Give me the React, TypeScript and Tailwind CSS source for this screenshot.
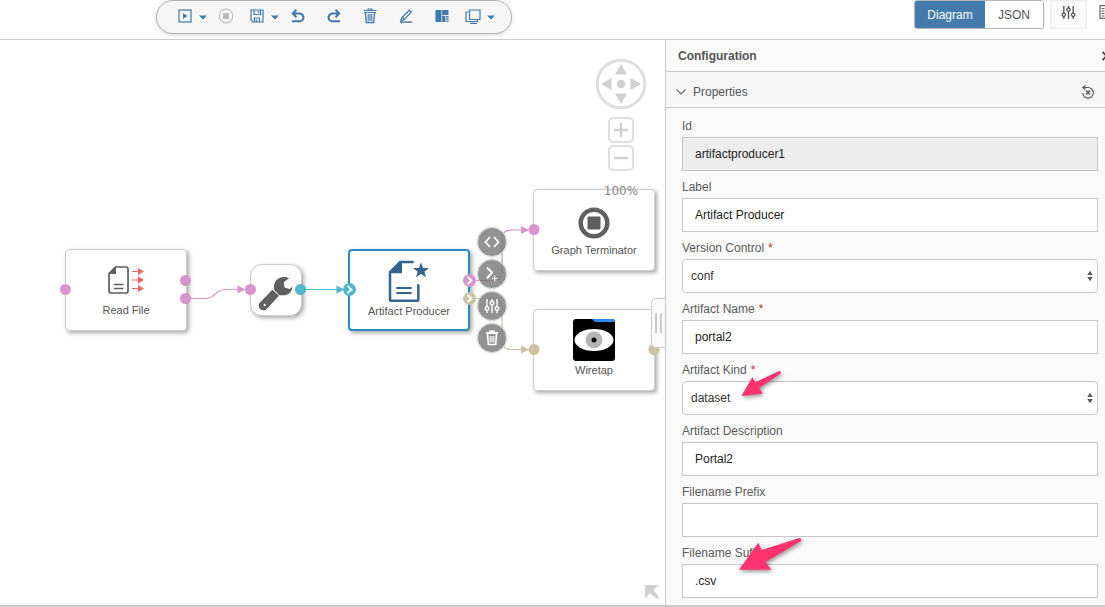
import type { ReactNode } from "react";

const PINK = "#d795cc";
const TEAL = "#52b7cc";
const SAND = "#cbc3a4";

function Caret() {
  return (
    <svg width="8" height="5" viewBox="0 0 8 5" className="mt-[2px] shrink-0">
      <path d="M0 0.500h8L4 4.500z" fill="#3f79ad" />
    </svg>
  );
}

function Tool({ label, menu, children }: { label: string; menu?: boolean; children: ReactNode }) {
  if (menu) {
    return (
      <div className="flex w-9 items-center">
        <button type="button" aria-label={label} className="flex w-[26px] justify-center">
          {children}
        </button>
        <button type="button" aria-label={`${label} options`} className="flex w-[10px] justify-center">
          <Caret />
        </button>
      </div>
    );
  }
  return (
    <button type="button" aria-label={label} className="flex w-9 items-center justify-center">
      {children}
    </button>
  );
}

function Toolbar() {
  return (
    <div className="flex h-[34px] items-stretch rounded-full border border-[#b3b3b3] bg-[#f6f6f6] px-[15px] pb-[2px] shadow-[0_1px_4px_rgba(0,0,0,0.18)]">
      <Tool label="Run" menu>
        <svg width="14" height="14" viewBox="0 0 14 14">
          <rect x="1" y="1" width="12" height="12" fill="none" stroke="#3f79ad" strokeWidth="1.200" />
          <path d="M5 4v6l4.500-3z" fill="#3f79ad" />
        </svg>
      </Tool>
      <Tool label="Stop">
        <svg width="16" height="16" viewBox="0 0 16 16">
          <circle cx="8" cy="8" r="6.800" fill="none" stroke="#bdbdbd" strokeWidth="1.200" />
          <rect x="5" y="5" width="6" height="6" rx="1" fill="#b8b8b8" />
        </svg>
      </Tool>
      <Tool label="Save" menu>
        <svg width="14" height="14" viewBox="0 0 14 14" fill="none" stroke="#3f79ad" strokeWidth="1.200">
          <path d="M1 1h12v12H3L1 11z" />
          <path d="M4 1v4.500h6.500V1M8.500 2v2M4.500 13V9h5v4M6.500 10.500V13" />
        </svg>
      </Tool>
      <Tool label="Undo">
        <svg width="14" height="14" viewBox="0 0 14 14" fill="none" stroke="#3f79ad" strokeWidth="2.100">
          <path d="M5.500 0.800L1.800 4.500 5.500 8.200M2 4.500h6.500a3.900 3.900 0 0 1 0 7.800H1" />
        </svg>
      </Tool>
      <Tool label="Redo">
        <svg width="14" height="14" viewBox="0 0 14 14" fill="none" stroke="#3f79ad" strokeWidth="2.100">
          <path d="M8.500 0.800l3.700 3.700L8.500 8.200M12 4.500H5.500a3.900 3.900 0 0 0 0 7.800H13" />
        </svg>
      </Tool>
      <Tool label="Delete">
        <svg width="14" height="16" viewBox="0 0 14 16" fill="none" stroke="#3f79ad">
          <path d="M0.500 2.500h13M5 2V1h4v1M1 4.500h12" strokeWidth="1.200" />
          <path d="M2.300 4.500l1 10h7.400l1-10" strokeWidth="1.300" />
          <path d="M5.200 6v7M7 6v7M8.800 6v7" strokeWidth="1.100" />
        </svg>
      </Tool>
      <Tool label="Edit">
        <svg width="14" height="14" viewBox="0 0 14 14" fill="none" stroke="#3f79ad" strokeWidth="1.300">
          <path d="M10.300 1.200l2 1.700-7 7.600-3.500 1.600 1-3.300z" />
          <path d="M3.500 8.500l2 1.700" />
          <path d="M1 13.100h12" strokeWidth="1.400" />
        </svg>
      </Tool>
      <Tool label="Layout">
        <svg width="14" height="14" viewBox="0 0 14 14" fill="#3f79ad">
          <path d="M0.500 1h6v12h-6zM7.200 1h6.300v5H7.200zM7.200 6.800h3.300V13H7.200zM11.300 7h2.200v1.700h-2.200zM11.300 9.500h2.200v1.500h-2.200zM11.300 11.700h2.200V13h-2.200z" />
        </svg>
      </Tool>
      <Tool label="Windows" menu>
        <svg width="16" height="15" viewBox="0 0 16 15" fill="none" stroke="#3f79ad" strokeWidth="1.200">
          <path d="M4.500 1h10.500v9.500H4.500zM3.500 3H1v9.500h11.500V11M5 14.300h7" />
        </svg>
      </Tool>
    </div>
  );
}

function Sliders({ color, size }: { color: string; size: number }) {
  return (
    <svg width={size} height={size} viewBox="0 0 16 16" fill="none" stroke={color} strokeWidth="1.400">
      <path d="M3 1v7.500M3 12.500V15M8 1v2M8 7v8M13 1v7.500M13 12.500V15" />
      <circle cx="3" cy="10.500" r="1.800" />
      <circle cx="8" cy="5" r="1.800" />
      <circle cx="13" cy="10.500" r="1.800" />
    </svg>
  );
}

function Header() {
  return (
    <header className="flex h-10 shrink-0 items-start border-b border-[#cbcbcb] bg-white">
      <div className="flex min-w-0 flex-1 justify-center pl-[3px]">
        <Toolbar />
      </div>
      <div className="flex w-[440px] shrink-0 items-start overflow-hidden pl-[249px]">
        <div className="flex h-[29px] w-[130px] shrink-0 overflow-hidden rounded-[3px] border border-[#b5b5b5] shadow-sm">
          <button type="button" className="w-[70px] bg-[#437bad] text-white">
            Diagram
          </button>
          <button type="button" className="flex-1 bg-white text-[#555]">
            JSON
          </button>
        </div>
        <button
          type="button"
          aria-label="Settings"
          className="ml-[6px] flex h-[29px] w-[37px] shrink-0 items-center justify-center bg-[#fcfcfc] pb-1 shadow-[inset_0_0_3px_rgba(0,0,0,0.15)]"
        >
          <Sliders color="#555" size={15} />
        </button>
        <button type="button" aria-label="Ruler" className="ml-[12px] mt-[5px] shrink-0">
          <svg width="10" height="14" viewBox="0 0 10 14" fill="none" stroke="#666" strokeWidth="1.200">
            <rect x="1" y="0.600" width="8" height="12.800" />
            <path d="M2.500 3.500h3M2.500 6h3M2.500 8.500h3M2.500 11h3" />
          </svg>
        </button>
      </div>
    </header>
  );
}

function Edges() {
  return (
    <svg width="665" height="400" viewBox="0 40 665 400" className="absolute left-0 top-0" fill="none" strokeWidth="1.200">
      <g stroke={PINK}>
        <path d="M186 298.500h18c14 0 8-9 24-9h12" />
        <path d="M469 280.500h24q9 0 9-9V239q0-9 9-9h14" />
      </g>
      <path d="M300 289.500h40" stroke={TEAL} />
      <path d="M469 298.500h24q9 0 9 9v33q0 9 9 9h14" stroke={SAND} />
      <g fill={PINK}>
        <path d="M237.500 285.500v8l8-4z" />
        <path d="M521 226v8l8-4z" />
      </g>
      <path d="M336.500 285.500v8l8-4z" fill={TEAL} />
      <path d="M521 345.500v8l8-4z" fill={SAND} />
    </svg>
  );
}

function Ports() {
  return (
    <svg width="665" height="400" viewBox="0 40 665 400" className="pointer-events-none absolute left-0 top-0">
      <g fill={PINK}>
        <circle cx="65.500" cy="289.500" r="5.500" />
        <circle cx="185.500" cy="280.500" r="5.500" />
        <circle cx="185.500" cy="298.500" r="5.500" />
        <circle cx="250.500" cy="289.500" r="5.500" />
        <circle cx="534" cy="229.500" r="5.500" />
        <circle cx="469.500" cy="280.500" r="6.500" />
      </g>
      <g fill={TEAL}>
        <circle cx="300.500" cy="289.500" r="5.500" />
        <circle cx="349.500" cy="289.500" r="6.500" />
      </g>
      <g fill={SAND}>
        <circle cx="469.500" cy="298.500" r="6.500" />
        <circle cx="534" cy="349.500" r="5.500" />
        <circle cx="654" cy="349.500" r="5.500" />
      </g>
      <path
        d="M347.500 286l4 3.500-4 3.500M467.500 277l4 3.500-4 3.500M467.500 295l4 3.500-4 3.500"
        fill="none"
        stroke="#fff"
        strokeWidth="1.800"
      />
    </svg>
  );
}

function Node({ place, label, selected, children }: { place: string; label: string; selected?: boolean; children: ReactNode }) {
  const frame = selected ? "border-2 border-[#2b8ac6] pb-[10px]" : "border border-[#ccc] pb-[12px]";
  return (
    <div
      className={`absolute flex h-[82px] w-[122px] flex-col items-center justify-end rounded bg-white shadow-[2px_2px_4px_rgba(0,0,0,0.35)] ${frame} ${place}`}
    >
      {children}
      <span className="whitespace-nowrap text-[11px] leading-4 text-[#555]">{label}</span>
    </div>
  );
}

function Action({ label, children }: { label: string; children: ReactNode }) {
  return (
    <button
      type="button"
      aria-label={label}
      className="flex h-[30px] w-[30px] items-center justify-center rounded-full border border-[#dcdcdc] bg-[#777]/80 shadow-[0_0_2px_rgba(0,0,0,0.2)]"
    >
      {children}
    </button>
  );
}

function ZoomControls() {
  return (
    <div className="absolute right-[18px] top-[18px] flex w-[52px] flex-col items-center">
      <button type="button" aria-label="Pan">
        <svg width="52" height="52" viewBox="0 0 52 52">
          <circle cx="26" cy="26" r="23.800" fill="#fff" stroke="#dfdfdf" strokeWidth="3" />
          <g fill="#d0d0d0">
            <circle cx="26" cy="26" r="4.300" />
            <path d="M26 6l6 10.500H20zM26 46l6-10.500H20zM6 26l10.500-6v12zM46 26l-10.500-6v12z" />
          </g>
        </svg>
      </button>
      <button type="button" aria-label="Zoom in" className="mt-[7px]">
        <svg width="26" height="26" viewBox="0 0 26 26" fill="none">
          <rect x="1" y="1" width="24" height="24" rx="4" stroke="#dedede" strokeWidth="2" />
          <path d="M13 6v14M6 13h14" stroke="#d0d0d0" strokeWidth="2.400" />
        </svg>
      </button>
      <button type="button" aria-label="Zoom out" className="mt-[2px]">
        <svg width="26" height="26" viewBox="0 0 26 26" fill="none">
          <rect x="1" y="1" width="24" height="24" rx="4" stroke="#dedede" strokeWidth="2" />
          <path d="M6 13h14" stroke="#d0d0d0" strokeWidth="2.400" />
        </svg>
      </button>
      <span className="mt-3 font-['DejaVu_Sans',sans-serif] text-[12px] leading-4 text-[#868686]">100%</span>
    </div>
  );
}

function Canvas() {
  return (
    <section aria-label="Diagram" className="relative min-w-0 flex-1 overflow-hidden bg-white">
      <Edges />
      <Node place="left-[65px] top-[209px]" label="Read File">
        <svg width="38" height="30" viewBox="0 0 38 30" className="mb-[7px]">
          <path d="M8.500 2H19q2 0 2 2v22q0 2-2 2H4q-2 0-2-2V8.500z" fill="none" stroke="#5f5f5f" strokeWidth="1.700" />
          <path d="M2 9L9 1.500V9z" fill="#5f5f5f" />
          <path d="M7 19.500h9.500M7 23.500h9.500" stroke="#5f5f5f" strokeWidth="1.500" />
          <g fill="#f0625f">
            <path d="M25 5.900h6v-3l6 3.600-6 3.600v-3h-6zM25 14.400h6v-3l6 3.600-6 3.600v-3h-6zM25 22.900h6v-3l6 3.600-6 3.600v-3h-6z" />
          </g>
        </svg>
      </Node>
      <div className="absolute left-[250px] top-[224px] flex h-[52px] w-[52px] items-center justify-center rounded-xl border border-[#ccc] bg-white shadow-[2px_2px_4px_rgba(0,0,0,0.35)]">
        <svg width="50" height="50" viewBox="48 75 150 150" fill="#5f5f5f">
          <path d="M112 149l20 18-37 40c-7 7-16 4-20-1-5-5-6-12 1-19z" />
          <circle cx="89" cy="195" r="3.500" fill="#fff" />
          <path d="M162 115L146 127l3 16 15 4 8-7c0 15-13 27-29 26l-10 0-16-17c-3-20 9-38 29-38 6 0 12 1 16 4z" />
        </svg>
      </div>
      <Node place="left-[348px] top-[209px]" label="Artifact Producer" selected>
        <svg width="42" height="43" viewBox="0 0 126 129" className="mr-[2px]">
          <path d="M80 6H40L9 37v82q0 3 3 3h79q3 0 3-3V73" fill="none" stroke="#31648e" strokeWidth="7.500" />
          <path d="M6 40L40 3h5v37z" fill="#31648e" />
          <path d="M28 84h46M28 99h46" stroke="#31648e" strokeWidth="6.500" />
          <path d="M102 7l6 17h18l-14 11 5 17-15-10-15 10 5-17-14-11h18z" fill="#31648e" />
        </svg>
      </Node>
      <Node place="left-[533px] top-[149px]" label="Graph Terminator">
        <svg width="32" height="32" viewBox="0 0 32 32" className="mb-[3px]">
          <circle cx="16" cy="16" r="13.300" fill="none" stroke="#5f5f5f" strokeWidth="4.500" />
          <rect x="9.500" y="9.500" width="13" height="13" rx="1" fill="#5f5f5f" />
        </svg>
      </Node>
      <Node place="left-[533px] top-[269px]" label="Wiretap">
        <svg width="42" height="42" viewBox="0 0 42 42" className="mb-px">
          <rect width="42" height="42" rx="3" fill="#000" />
          <path d="M19 0h20q3 0 3 3H22z" fill="#2d8ceb" />
          <ellipse cx="21" cy="21" rx="19.500" ry="11" fill="#fff" />
          <circle cx="21" cy="21" r="8.500" fill="#b5b5b5" />
          <circle cx="21" cy="21" r="2.500" fill="#000" />
        </svg>
      </Node>
      <Ports />
      <div className="absolute left-[477px] top-[187px] flex flex-col gap-[2px]">
        <Action label="View code">
          <svg width="16" height="12" viewBox="0 0 16 12" fill="none" stroke="#fff" strokeWidth="1.700">
            <path d="M6 1L1.500 6 6 11M10 1l4.500 5-4.500 5" />
          </svg>
        </Action>
        <Action label="Open terminal">
          <svg width="16" height="16" viewBox="0 0 16 16" fill="none" stroke="#fff">
            <path d="M3 1.500l5 5-5 6" strokeWidth="2" />
            <path d="M8 12.500h5.500M10.750 9.800v5.500" strokeWidth="1.200" />
          </svg>
        </Action>
        <Action label="Configure">
          <Sliders color="#fff" size={16} />
        </Action>
        <Action label="Delete node">
          <svg width="14" height="16" viewBox="0 0 14 16" fill="none" stroke="#fff">
            <path d="M1 3h12M5 2.500v-1h4v1" strokeWidth="2" />
            <path d="M2.500 4l.8 10.500h7.400l.8-10.500" strokeWidth="1.600" />
            <path d="M5.200 6v6.500M7 6v6.500M8.800 6v6.500" strokeWidth="1.100" />
          </svg>
        </Action>
      </div>
      <ZoomControls />
      <button
        type="button"
        aria-label="Resize panel"
        className="absolute right-0 top-[258px] flex h-[50px] w-[14px] items-center justify-center gap-[3px] rounded-l-[5px] border border-r-0 border-[#ccc] bg-[#fafafa]"
      >
        <span className="h-5 w-[2px] bg-[#ccc]" />
        <span className="h-5 w-[2px] bg-[#ccc]" />
      </button>
      <button type="button" aria-label="Show overview" className="absolute bottom-[6px] right-[6px]">
        <svg width="14" height="14" viewBox="0 0 14 14">
          <path d="M0 0h14L8.500 4.500 14 12.500 12.500 14 4.500 8.500 0 14z" fill="#d0d0d0" />
        </svg>
      </button>
    </section>
  );
}

type FieldData = {
  id: string;
  label: string;
  value: string;
  required?: boolean;
  select?: boolean;
  readOnly?: boolean;
};

const fields: FieldData[] = [
  { id: "id", label: "Id", value: "artifactproducer1", readOnly: true },
  { id: "label", label: "Label", value: "Artifact Producer" },
  { id: "version", label: "Version Control", value: "conf", required: true, select: true },
  { id: "name", label: "Artifact Name", value: "portal2", required: true },
  { id: "kind", label: "Artifact Kind", value: "dataset", required: true, select: true },
  { id: "description", label: "Artifact Description", value: "Portal2" },
  { id: "prefix", label: "Filename Prefix", value: "" },
  { id: "suffix", label: "Filename Suffix", value: ".csv" },
];

function Field({ field }: { field: FieldData }) {
  const { id, label, value, required, select, readOnly } = field;
  return (
    <div className="flex flex-col">
      <label htmlFor={id} className="mb-[3px] leading-4 text-[#5a5a5a]">
        {label}
        {required && <span className="ml-1 text-[#b8302c]">*</span>}
      </label>
      {select ? (
        <div className="relative">
          <select
            id={id}
            defaultValue={value}
            className="block h-[34px] w-full appearance-none rounded border border-[#c6c6c6] bg-white px-2 text-[#333]"
          >
            <option>{value}</option>
          </select>
          <svg width="6" height="12" viewBox="0 0 6 12" className="pointer-events-none absolute right-[5px] top-[11px]">
            <path d="M0.300 5L3 0.800 5.700 5zM0.300 7L3 11.200 5.700 7z" fill="#555" />
          </svg>
        </div>
      ) : (
        <input
          id={id}
          type="text"
          defaultValue={value}
          readOnly={readOnly}
          className={`h-[34px] w-full border border-[#c6c6c6] px-3 text-[#222] ${readOnly ? "bg-[#ededed]" : "bg-white"}`}
        />
      )}
    </div>
  );
}

function Panel() {
  return (
    <aside className="relative w-[440px] shrink-0 overflow-hidden border-l border-[#c8c8c8] bg-[#fafafa]">
      <div className="flex h-8 items-center justify-between border-b border-[#c8c8c8] pl-3">
        <h2 className="font-bold text-[#555]">Configuration</h2>
        <button type="button" aria-label="Collapse panel" className="w-[3px] overflow-hidden">
          <svg width="10" height="10" viewBox="0 0 10 10" fill="none" stroke="#444" strokeWidth="1.900">
            <path d="M0.500 1l4 4-4 4" />
          </svg>
        </button>
      </div>
      <div className="flex h-9 items-center justify-between border-b border-[#c8c8c8] bg-[#f6f6f6] px-[10px] pt-1">
        <button type="button" aria-expanded="true" className="flex items-center gap-[7px] text-[#555]">
          <svg width="10" height="6" viewBox="0 0 10 6" fill="none" stroke="#666" strokeWidth="1.100">
            <path d="M0.500 0.500L5 5l4.500-4.500" />
          </svg>
          Properties
        </button>
        <button type="button" aria-label="Reset properties">
          <svg width="14" height="14" viewBox="0 0 14 14" fill="none" stroke="#555" strokeWidth="1.100">
            <path d="M2.500 2.500H7a5.300 5.300 0 1 1-5.300 5.300" />
            <path d="M4.500 0.500l-2.800 2 2.800 2" />
            <path d="M5 5.500l4 4M9 5.500l-4 4" strokeWidth="1.500" />
          </svg>
        </button>
      </div>
      <form className="flex flex-col gap-2 pb-[7px] pl-4 pr-[7px] pt-[10px]">
        {fields.map((f) => (
          <Field key={f.id} field={f} />
        ))}
      </form>
      <svg
        width="200"
        height="240"
        viewBox="0 60 600 720"
        className="pointer-events-none absolute left-[-1px] top-[320px] drop-shadow-[1px_2px_2px_rgba(0,0,0,0.4)]"
        fill="#ff3370"
      >
        <path d="M229 168L262 112l9 15 71-34q7 1 5 8l-64 43 10 17z" />
        <path d="M222 689L280 608l10 22 113-36q8 1 5 9L302 666l17 23z" />
      </svg>
    </aside>
  );
}

export default function App() {
  return (
    <div className="flex min-h-screen flex-col bg-white font-['Liberation_Sans',Arial,sans-serif] text-[12px]">
      <Header />
      <main className="flex flex-1 border-b-2 border-[#cbcbcb]">
        <Canvas />
        <Panel />
      </main>
    </div>
  );
}
